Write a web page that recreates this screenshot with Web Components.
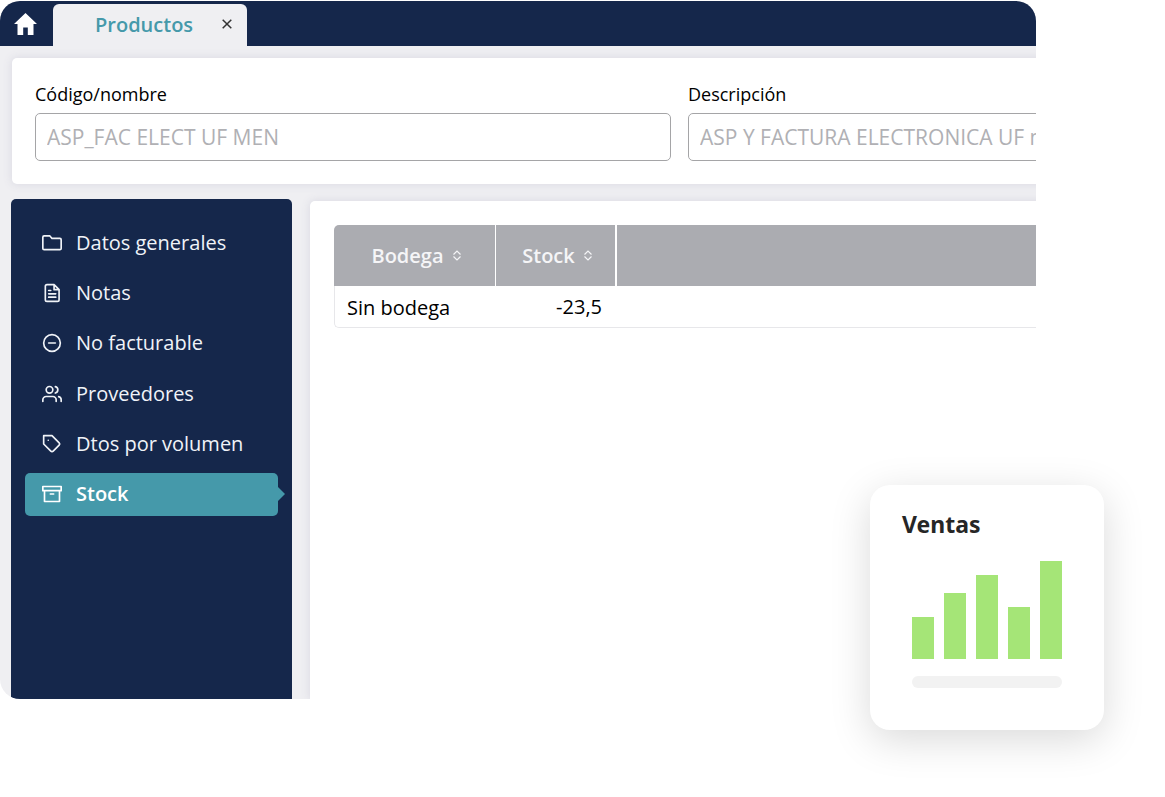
<!DOCTYPE html>
<html lang="es">
<head>
<meta charset="utf-8">
<title>Productos</title>
<style>
html,body{margin:0;background:#fff}
body{font-family:"Open Sans","Noto Sans",sans-serif;font-size:20px;line-height:28px;color:#000}
</style>
</head>
<body>
<product-page></product-page>
<script>
const define = (name, html) => customElements.define(name, class extends HTMLElement {
  constructor() {
    super();
    const t = document.createElement('template');
    t.innerHTML = '<style>*{box-sizing:border-box}:host{display:block;box-sizing:border-box}</style>' + html;
    this.attachShadow({mode: 'open'}).append(t.content.cloneNode(true));
  }
});

define('app-tabs', `
<style>
:host{background:#15274b;height:45px;padding-top:3px}
.bar{display:flex;height:42px}
.home{width:53px;display:grid;place-items:center start;padding:0 0 3px 14px;color:#fff}
.tab{width:194px;display:grid;grid-template-columns:1fr 13px;align-items:center;padding:0 14px 0 42px;background:#efeff2;border-radius:6px 6px 0 0}
a{color:#4599aa;font-weight:600;text-decoration:none}
button{border:0;background:none;padding:0;height:24px;display:grid;place-items:start center;padding-top:6px;color:#333}
svg{display:block}
</style>
<div class="bar">
<a class="home" href="#inicio" aria-label="Inicio"><svg width="23" height="22" viewBox="0 0 23 22" fill="currentColor"><path d="M11.500 0 23 11H19.500V22H13.800V14.500H9.200V22H3.500V11H0Z"/></svg></a>
<div class="tab"><a href="#productos">Productos</a><button aria-label="Cerrar"><svg width="10" height="10" viewBox="0 0 10 10" stroke="currentColor" stroke-width="1.500"><path d="M.7.7 9.300 9.300M9.300.7.7 9.300"/></svg></button></div>
</div>`);

define('panel-card', `
<style>:host{background:#fff;border-radius:5px;box-shadow:0 0 8px 1px #dcdbe4}</style><slot></slot>`);

customElements.define('text-field', class extends HTMLElement {
  constructor() {
    super();
    this.attachShadow({mode: 'open'}).innerHTML = `
<style>
:host{display:block}
label{display:block;font-size:18px;line-height:26px;margin-bottom:6px}
input{display:block;box-sizing:border-box;width:100%;height:48px;border:1px solid #a5a5a7;border-radius:5px;padding:0 11px;background:#fff;font:inherit;font-size:21px;color:#b0b0b4;outline:0}
</style><label for="f"></label><input id="f" readonly>`;
  }
  connectedCallback() {
    this.shadowRoot.querySelector('label').textContent = this.getAttribute('label');
    this.shadowRoot.querySelector('input').value = this.getAttribute('value');
  }
});

define('menu-item', `
<style>
a{display:flex;align-items:center;gap:14px;height:43px;padding:0 17px;border-radius:5px;color:#f0f3f8;text-decoration:none;position:relative}
:host([active]) a{background:#4599aa;color:#fff;font-weight:600}
:host([active]) a::after{content:"";position:absolute;left:100%;top:50%;margin-top:-7px;border:7px solid transparent;border-left-color:#4599aa;border-right:0}
::slotted(svg){width:20px;height:20px;flex:none;fill:none;stroke:currentColor;stroke-width:2;stroke-linecap:round;stroke-linejoin:round}
</style>
<a href="#"><slot name="icon"></slot><slot></slot></a>`);

define('side-menu', `
<style>
:host{background:#15274b;border-radius:5px 5px 0 0;padding:22px 14px}
nav{display:flex;flex-direction:column;justify-content:space-between;height:295px}
</style>
<nav>
<menu-item><svg slot="icon" viewBox="0 0 24 24"><path d="M2.500 3.500h7l2.500 3h9.500a1.500 1.500 0 0 1 1.500 1.500v10.500a1.500 1.500 0 0 1-1.500 1.500H2.500A1.500 1.500 0 0 1 1 18.500V5A1.500 1.500 0 0 1 2.500 3.500Z"/></svg>Datos generales</menu-item>
<menu-item><svg slot="icon" viewBox="0 0 24 24"><path d="M14.500 2H6a2 2 0 0 0-2 2v16a2 2 0 0 0 2 2h12.500a2 2 0 0 0 2-2V8Z M14.500 2v6h6 M8 9h2.500M8 13h8.500M8 17h8.500"/></svg>Notas</menu-item>
<menu-item><svg slot="icon" viewBox="0 0 24 24"><circle cx="12" cy="12" r="10"/><path d="M8 12h8"/></svg>No facturable</menu-item>
<menu-item><svg slot="icon" viewBox="0 0 24 24"><path d="M17 21v-2a4 4 0 0 0-4-4H5a4 4 0 0 0-4 4v2M23 21v-2a4 4 0 0 0-3-3.870M16 3.130a4 4 0 0 1 0 7.750"/><circle cx="9" cy="7" r="4"/></svg>Proveedores</menu-item>
<menu-item><svg slot="icon" viewBox="0 0 24 24"><path d="M20.590 13.410l-7.170 7.170a2 2 0 0 1-2.830 0L2 12V2h10l8.590 8.590a2 2 0 0 1 0 2.820ZM7.500 7.500h.01"/></svg>Dtos por volumen</menu-item>
<menu-item active><svg slot="icon" viewBox="0 0 24 24"><path d="M21 8v13H3V8M1 3h22v5H1ZM10 12h4"/></svg>Stock</menu-item>
</nav>`);

define('stock-table', `
<style>
:host{padding:24px}
table{width:100%;border-collapse:separate;border-spacing:0;table-layout:fixed}
.c1{width:162px}.c2{width:121px}
th{height:61px;padding:0;background:#abacb1;color:#f5f5f7;font-weight:600;border-right:1px solid #fff}
th:nth-child(2){border-right-width:2px}
th:first-child{border-radius:5px 0 0 0}
th:last-child,td:last-child{border-right:0}
button{display:flex;align-items:center;justify-content:center;gap:9px;width:100%;border:0;padding:0 0 0 3px;background:none;color:inherit;font:inherit}
td{height:42px;padding:2px 12px 0;border-bottom:1px solid #e7e7ea;text-align:left}
td:first-child{border-left:1px solid #e7e7ea;border-radius:0 0 0 5px}
td.n{text-align:right;padding:0 15px 0 0}
svg{fill:none;stroke:currentColor;stroke-width:1.200}
</style>
<table>
<colgroup><col class="c1"><col class="c2"><col></colgroup>
<thead><tr><th><button>Bodega <svg width="8" height="11" viewBox="0 0 8 11"><path d="M.5 4.500 4 1 7.500 4.500M.5 6.500 4 10 7.500 6.500"/></svg></button></th><th><button>Stock <svg width="8" height="11" viewBox="0 0 8 11"><path d="M.5 4.500 4 1 7.500 4.500M.5 6.500 4 10 7.500 6.500"/></svg></button></th><th></th></tr></thead>
<tbody><tr><td>Sin bodega</td><td class="n">-23,5</td><td></td></tr></tbody>
</table>`);

define('app-window', `
<style>
:host{display:flex;flex-direction:column;overflow:hidden;border-radius:20px 20px 0 20px;background:#efeff2}
.work{flex:1;display:flex;flex-direction:column;gap:15px;padding:12px 11px 0 12px;width:calc(100% + 322px)}
.fields{display:grid;grid-template-columns:1fr 1fr;gap:17px;padding:23px 23px 23px}
.body{flex:1;display:grid;grid-template-columns:281px 1fr;gap:18px;margin-left:-1px}
.table{margin-top:2px;border-radius:5px 5px 0 0}
</style>
<app-tabs></app-tabs>
<div class="work">
<panel-card><div class="fields"><text-field label="Código/nombre" value="ASP_FAC ELECT UF MEN"></text-field><text-field label="Descripción" value="ASP Y FACTURA ELECTRONICA UF mensual"></text-field></div></panel-card>
<div class="body"><side-menu></side-menu><panel-card class="table"><stock-table></stock-table></panel-card></div>
</div>`);

define('sales-card', `
<style>
:host{width:234px;padding:24px 32px 42px;border-radius:20px;background:#fff;box-shadow:0 10px 40px rgba(0,0,0,.15)}
h2{margin:0;font-family:"Noto Sans",sans-serif;font-size:23px;line-height:30px;font-weight:700;color:#262626}
.chart{display:flex;align-items:flex-end;gap:10px;height:98px;margin:22px 10px 17px}
.chart i{width:22px;background:#a5e577}
.axis{height:12px;margin:0 10px;border-radius:6px;background:#f2f2f2}
</style>
<h2>Ventas</h2>
<div class="chart"><i style="height:42px"></i><i style="height:66px"></i><i style="height:84px"></i><i style="height:52px"></i><i style="height:98px"></i></div>
<div class="axis"></div>`);

define('product-page', `
<style>
:host{display:flex;position:relative;min-height:100vh;padding:1px 129px 98px 0}
app-window{flex:1;min-width:0}
sales-card{position:absolute;right:61px;bottom:67px}
</style>
<app-window></app-window><sales-card></sales-card>`);
</script>
</body>
</html>
